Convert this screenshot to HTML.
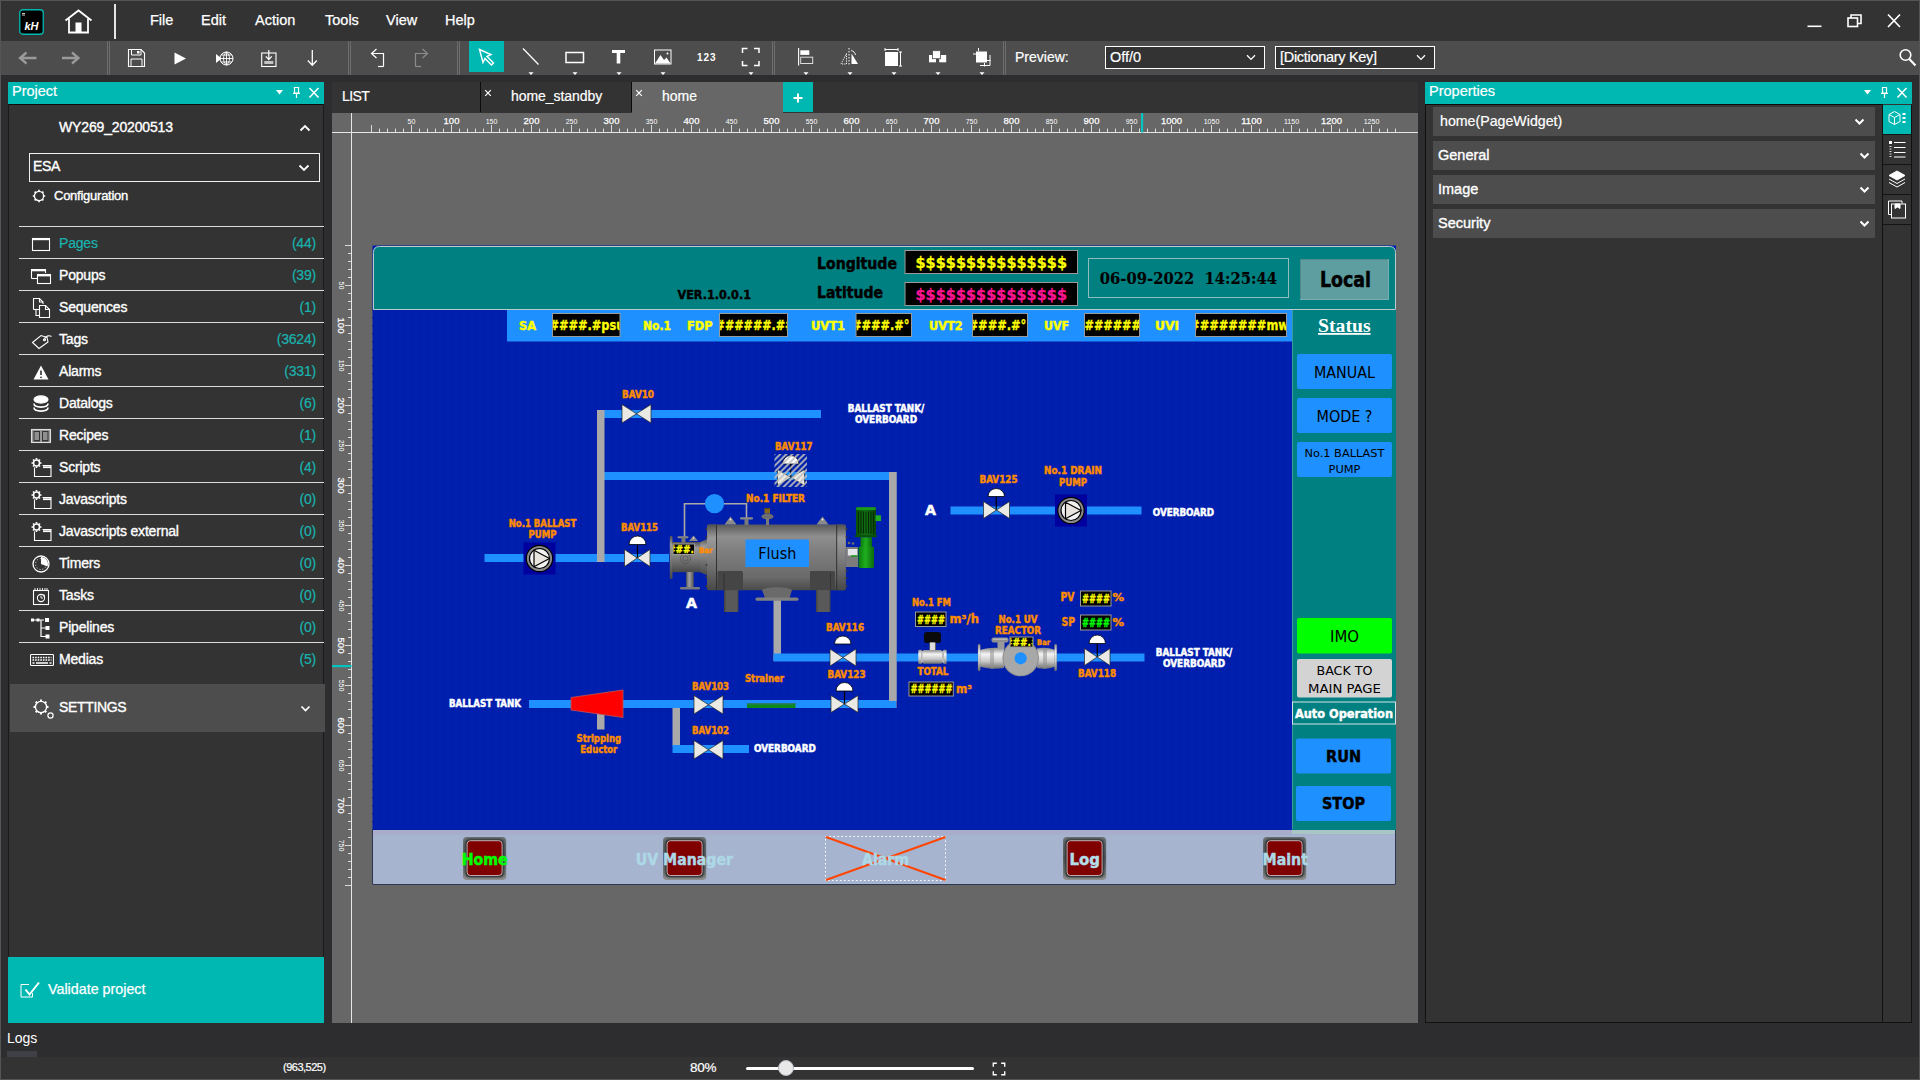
<!DOCTYPE html>
<html lang="en"><head><meta charset="utf-8"><title>HMI Editor - home</title>
<style>
*{margin:0;padding:0;box-sizing:border-box}
html,body{width:1920px;height:1080px;overflow:hidden;background:#2d2d30}
body{font-family:"Liberation Sans",sans-serif;color:#fff;position:relative}
.abs{position:absolute}
#app{position:absolute;left:0;top:0;width:1920px;height:1080px;background:#2d2d30;overflow:hidden}
#frame{position:absolute;left:0;top:0;width:1920px;height:1080px;border:1px solid #555;pointer-events:none;z-index:50}
#titlebar{position:absolute;left:0;top:0;width:1920px;height:41px;background:#333}
.menu{font-size:14.5px;white-space:nowrap;-webkit-text-stroke:0.25px #fff}
#toolbar{position:absolute;left:0;top:41px;width:1920px;height:34px;background:#4d4d4d}
.lbl{white-space:nowrap;-webkit-text-stroke:0.2px #fff}
.sel{border:1px solid #fff;background:#333;font-size:14.5px;height:23px}
.sel span{position:absolute;top:2px;white-space:nowrap;-webkit-text-stroke:0.2px #fff}
#project{position:absolute;left:8px;top:82px;width:316px;height:941px}
.phead{position:absolute;left:0;top:0;width:316px;height:22px;background:#00b8b2;font-size:15px}
.phead span{position:absolute;left:4px;top:1px;font-size:14.5px;-webkit-text-stroke:0.2px #fff}
.pbody{position:absolute;left:0;top:22px;width:316px;height:853px;background:#333;border-left:1px solid #1a1a1a;border-right:1px solid #1a1a1a;box-shadow:inset 0 1px 0 #0c0c0c}
.pbody span{white-space:nowrap;-webkit-text-stroke:0.35px #fff}
.row{left:0;width:316px;height:31px}
.row .ic{position:absolute;left:21px;top:6px}
.row .nm{position:absolute;left:50px;top:8px;font-size:14px;letter-spacing:-0.2px}
.row .ct{position:absolute;right:9px;top:8px;font-size:14px;letter-spacing:-0.2px;color:#19b3ae;-webkit-text-stroke:0.2px #19b3ae}
.row .teal{color:#19b3ae;-webkit-text-stroke:0.2px #19b3ae}
.validate{position:absolute;left:0;top:875px;width:316px;height:66px;background:#00b8b2}
.validate span{white-space:nowrap;-webkit-text-stroke:0.25px #fff}
#center{position:absolute;left:332px;top:82px;width:1086px;height:941px;background:#676767;overflow:hidden}
#tabs{position:absolute;left:0;top:0;width:1086px;height:31px;background:#333}
.tab{position:absolute;top:0;height:30px;background:#333;font-size:14px;border-right:1px solid #0c0c0c}
.tab span{position:absolute;top:6px;white-space:nowrap;-webkit-text-stroke:0.2px #fff}
.tab .x{font-size:12px;top:2px}
#props{position:absolute;left:1425px;top:82px;width:487px;height:941px}
#props .phead{width:487px}
#props .pb{position:absolute;left:0;top:22px;width:457px;height:919px;background:#333;border-left:1px solid #111;border-bottom:1px solid #111;box-shadow:inset 0 1px 0 #0c0c0c}
.prow{position:absolute;left:7px;width:442px;height:29px;background:#4d4d4d;font-size:14.5px}
.prow span{position:absolute;left:5px;top:6px;-webkit-text-stroke:0.35px #fff;white-space:nowrap}
#pstrip{position:absolute;left:457px;top:22px;width:30px;height:919px;background:#333;border:1px solid #111;border-top:none}
.ptab{position:absolute;left:0;width:28px;height:30px;border-bottom:1px solid #141414}
#logs{position:absolute;left:0;top:1023px;width:1920px;height:34px;background:#2d2d30;font-size:14.5px}
#status{position:absolute;left:0;top:1057px;width:1920px;height:23px;background:#333}
</style></head>
<body><div id="app">
<div id="titlebar">
<svg class="abs" style="left:19px;top:9px" width="25" height="26" viewBox="0 0 25 26"><rect x="0.75" y="0.75" width="23.5" height="24.5" rx="3" fill="#000" stroke="#00b8b2" stroke-width="1.3"/><rect x="3" y="4" width="3" height="0.9" fill="#ddd"/><rect x="3" y="5.6" width="3" height="0.9" fill="#ddd"/><text x="5.5" y="20.5" font-family="Liberation Sans, sans-serif" font-size="11" font-weight="bold" font-style="italic" fill="#fff" textLength="14" lengthAdjust="spacingAndGlyphs">kH</text></svg>
<svg class="abs" style="left:64px;top:9px" width="30" height="26" viewBox="0 0 30 26"><path d="M1.5 11.5 L14.5 1.5 L27.5 11.5" fill="none" stroke="#fff" stroke-width="1.8" stroke-linejoin="miter"/><path d="M5 9.5 V23.5 H24 V9.5" fill="none" stroke="#fff" stroke-width="1.8"/><rect x="11.5" y="13.5" width="6" height="10" fill="#fff"/></svg>
<div class="abs" style="left:114px;top:4px;width:2px;height:35px;background:#e4e4e4"></div>
<span class="menu abs" style="left:150px;top:12px;width:22px">File</span>
<span class="menu abs" style="left:201px;top:12px;width:26px">Edit</span>
<span class="menu abs" style="left:255px;top:12px;width:41px">Action</span>
<span class="menu abs" style="left:325px;top:12px;width:33px">Tools</span>
<span class="menu abs" style="left:386px;top:12px;width:31px">View</span>
<span class="menu abs" style="left:445px;top:12px;width:30px">Help</span>
<svg class="abs" style="left:1800px;top:8px" width="110" height="26" viewBox="0 0 110 26" fill="none" stroke="#fff" stroke-width="1.6"><path d="M7.5 18.3 H21.5"/><rect x="48" y="10" width="9.5" height="8.5"/><path d="M51 10 V7 H61 V15.5 H57.5"/><path d="M88 6.5 L100 19 M100 6.5 L88 19" stroke-width="1.7"/></svg>
</div>
<div id="toolbar">
<svg class="abs" style="left:0;top:0" width="1920" height="34" viewBox="0 0 1920 34"><path d="M36.5 17 H20.5 M26.5 11.5 L20.0 17 L26.5 22.5" fill="none" stroke="#9a9a9a" stroke-width="2.3"/><path d="M62 17 H78 M72 11.5 L78.5 17 L72 22.5" fill="none" stroke="#9a9a9a" stroke-width="2.3"/><path d="M107.5 0V34M109.5 0V34" stroke="#6e6e6e" stroke-width="1"/><path d="M128.5 8.5 H141 L144.5 12 V25.5 H128.5 Z" fill="none" stroke="#fff" stroke-width="1.1"/><path d="M131.5 8.5 V14 H141 V8.5 M131 25.5 V18 H142 V25.5" fill="none" stroke="#fff" stroke-width="1"/><rect x="137" y="10" width="2.5" height="2.5" fill="#fff"/><path d="M174.5 11.5 L186 17.5 L174.5 23.5 Z" fill="#fff"/><circle cx="226.5" cy="17.5" r="6.5" fill="none" stroke="#fff" stroke-width="1"/><path d="M226.5 11 V24 M220 17.5 H233 M221.3 14 H231.7 M221.3 21 H231.7 M226.5 11 C222.5 13.5 222.5 21.5 226.5 24 M226.5 11 C230.5 13.5 230.5 21.5 226.5 24" fill="none" stroke="#fff" stroke-width="0.9"/><path d="M216 13 L221.5 17.5 L216 22 Z" fill="#fff"/><rect x="261.7" y="12" width="14.3" height="13.5" fill="none" stroke="#fff" stroke-width="1.1"/><path d="M268.8 9 V18.5 M265.8 15.3 L268.8 18.5 L271.8 15.3" fill="none" stroke="#fff" stroke-width="1.2"/><rect x="264.3" y="20" width="9" height="3" fill="#c4c4c4"/><path d="M312.3 9 V24 M307.8 19.5 L312.3 24.3 L316.8 19.5" fill="none" stroke="#fff" stroke-width="1.3"/><path d="M348.5 0V34M350.5 0V34" stroke="#6e6e6e" stroke-width="1"/><path d="M383.5 25.5 V12.5 H372 M376.5 8 L371.5 12.5 L376.5 17" fill="none" stroke="#fff" stroke-width="1.2"/><path d="M378 25.5H383.5" stroke="#fff" stroke-width="1.2"/><path d="M415.5 25.5 V12.5 H427 M422.5 8 L427.5 12.5 L422.5 17" fill="none" stroke="#8c8c8c" stroke-width="1.2"/><path d="M415.5 25.5H421" stroke="#8c8c8c" stroke-width="1.2"/><path d="M457.5 0V34M459.5 0V34" stroke="#6e6e6e" stroke-width="1"/><rect x="469" y="0" width="35" height="31" fill="#00b8b2"/><path d="M479.5 8.5 L491 13.5 L487 15.5 L493.5 22 L491.5 24 L485 17.5 L483 21.5 Z" fill="none" stroke="#fff" stroke-width="1.4" stroke-linejoin="miter"/><path d="M523 7.5 L538.5 23.5" stroke="#fff" stroke-width="1.3"/><path d="M528.5 31.3 H533.5 L531 34 Z" fill="#fff"/><rect x="566" y="11.5" width="17.5" height="10" fill="none" stroke="#fff" stroke-width="1.5"/><path d="M572.5 31.3 H577.5 L575 34 Z" fill="#fff"/><path d="M612 9 H625 V12 H620.3 V22.5 H616.7 V12 H612 Z" fill="#fff"/><path d="M616.5 31.3 H621.5 L619 34 Z" fill="#fff"/><rect x="654.5" y="9" width="16.5" height="14" fill="none" stroke="#fff" stroke-width="1"/><path d="M655 22.5 L660.5 14 L664 19 L666.5 16.5 L670.5 22.5 Z" fill="#fff"/><circle cx="667.5" cy="12.5" r="1" fill="#fff"/><path d="M660.5 31.3 H665.5 L663 34 Z" fill="#fff"/><text x="697" y="20" font-family="Liberation Sans, sans-serif" font-size="10" font-weight="bold" fill="#fff" textLength="18.5" lengthAdjust="spacing">123</text><path d="M742.5 12 V7.5 H747.5 M754 7.5 H759 V12 M759 20 V24.5 H754 M747.5 24.5 H742.5 V20" fill="none" stroke="#fff" stroke-width="1.5"/><path d="M748.5 31.3 H753.5 L751 34 Z" fill="#fff"/><path d="M772.5 0V34M774.5 0V34" stroke="#6e6e6e" stroke-width="1"/><path d="M798.6 7 V24.5" stroke="#fff" stroke-width="1.1"/><rect x="800.3" y="9.3" width="9" height="4.6" fill="#fff"/><rect x="800.7" y="16.2" width="12" height="6.3" fill="none" stroke="#ddd" stroke-width="1"/><path d="M803.5 31.3 H808.5 L806 34 Z" fill="#fff"/><path d="M849 7 V24" stroke="#fff" stroke-width="1" stroke-dasharray="1.5 1.5"/><path d="M846.5 12.5 V23 H841 Z" fill="none" stroke="#fff" stroke-width="0.9" stroke-dasharray="1.3 1"/><path d="M851.5 12.5 V23 H858 Z" fill="#fff"/><path d="M851 9.5 C853.5 10 855 11.5 855.5 14" fill="none" stroke="#fff" stroke-width="0.9"/><path d="M847.5 31.3 H852.5 L850 34 Z" fill="#fff"/><rect x="885" y="11" width="13" height="14" fill="#fff"/><path d="M885 8.5 H898 M885 7 V10 M898 7 V10 M900.5 11 V25 M899 11 H902 M899 25 H902" stroke="#fff" stroke-width="1"/><path d="M891.5 31.3 H896.5 L894 34 Z" fill="#fff"/><rect x="929" y="14" width="7" height="7.3" fill="#fff"/><rect x="939.2" y="14" width="7" height="7.3" fill="#fff"/><rect x="932.5" y="9.7" width="8" height="8" fill="#fff" stroke="#4d4d4d" stroke-width="0.8"/><path d="M935.5 31.3 H940.5 L938 34 Z" fill="#fff"/><rect x="976" y="10.5" width="11" height="11" fill="#fff"/><path d="M978.5 7 V10 M973 13 H976 M984.5 22 V25.5 M987 19.5 H990.5 M980 24.5 H990 V14" fill="none" stroke="#fff" stroke-width="1"/><path d="M979.5 31.3 H984.5 L982 34 Z" fill="#fff"/><path d="M1003.5 0V34M1005.5 0V34" stroke="#6e6e6e" stroke-width="1"/><circle cx="1905.5" cy="14" r="5.3" fill="none" stroke="#fff" stroke-width="1.6"/><path d="M1909.3 18 L1915.5 24.5" stroke="#fff" stroke-width="2.2"/></svg>
<span class="abs lbl" style="left:1015px;top:8px;font-size:14px">Preview:</span>
<div class="sel abs" style="left:1105px;top:5px;width:160px;height:23px"><span style="left:4px">Off/0</span><svg class="abs" style="left:140px;top:7px" width="10" height="7" viewBox="0 0 10 7"><path d="M1 1.2 L5 5.4 L9 1.2" fill="none" stroke="#fff" stroke-width="1.3"/></svg></div>
<div class="sel abs" style="left:1275px;top:5px;width:160px;height:23px"><span style="left:4px;letter-spacing:-0.3px">[Dictionary Key]</span><svg class="abs" style="left:140px;top:7px" width="10" height="7" viewBox="0 0 10 7"><path d="M1 1.2 L5 5.4 L9 1.2" fill="none" stroke="#fff" stroke-width="1.3"/></svg></div>
</div>
<div id="project">
<div class="phead"><span>Project</span><svg class="abs" style="right:2px;top:3px" width="50" height="16" viewBox="0 0 50 16"><path d="M4 5 H11 L7.5 9.5 Z" fill="#fff"/><path d="M22.5 2.5 H26.5 V8 H22.5 Z M21 8.3 H28 M24.5 8.5 V13" fill="none" stroke="#fff" stroke-width="1.2"/><path d="M37.5 3 L46.5 12.5 M46.5 3 L37.5 12.5" stroke="#fff" stroke-width="1.5"/></svg></div>
<div class="pbody">
<span class="abs" style="left:50px;top:15px;font-size:14px;width:116px;letter-spacing:-0.15px">WY269_20200513</span>
<svg class="abs" style="left:290px;top:20px" width="12" height="8" viewBox="0 0 12 8"><path d="M1.5 6.5 L6 2 L10.5 6.5" fill="none" stroke="#fff" stroke-width="1.8"/></svg>
<div class="abs" style="left:20px;top:49px;width:291px;height:29px;border:1px solid #f0f0f0;box-sizing:border-box"><span class="abs" style="left:3px;top:4px;font-size:14px;letter-spacing:-0.4px">ESA</span><svg class="abs" style="left:268px;top:10px" width="12" height="8" viewBox="0 0 12 8"><path d="M1.5 1.5 L6 6 L10.5 1.5" fill="none" stroke="#fff" stroke-width="1.8"/></svg></div>
<svg class="abs" style="left:23px;top:85px" width="14" height="14" viewBox="0 0 14 14"><circle cx="7" cy="7" r="4.6" fill="none" stroke="#fff" stroke-width="1.3"/><g stroke="#fff" stroke-width="1.6"><path d="M7 0.8V2.6M7 11.4V13.2M0.8 7H2.6M11.4 7H13.2M2.6 2.6L3.9 3.9M10.1 10.1L11.4 11.4M2.6 11.4L3.9 10.1M10.1 3.9L11.4 2.6"/></g></svg>
<span class="abs" style="left:45px;top:84px;font-size:13px;letter-spacing:-0.25px">Configuration</span>
<div class="abs" style="left:10px;top:122px;width:305px;height:1px;background:#dcdcdc"></div>
<div class="row abs" style="top:123px"><svg class="ic" width="22" height="22" viewBox="0 0 22 22" fill="none" stroke="#fff" stroke-width="1.1"><rect x="2.5" y="5.5" width="17" height="12"/><path d="M2.5 6.2H19.5" stroke-width="2"/></svg><span class="nm teal">Pages</span><span class="ct">(44)</span></div>
<div class="abs" style="left:10px;top:154px;width:305px;height:1px;background:#dcdcdc"></div>
<div class="row abs" style="top:155px"><svg class="ic" width="22" height="22" viewBox="0 0 22 22" fill="none" stroke="#fff" stroke-width="1.1"><path d="M1.5 13.5 V4.5 H15.5 V8"/><path d="M1.5 5.3H15.5" stroke-width="2"/><rect x="7.5" y="9.5" width="13" height="9"/><path d="M7.5 10.4H20.5" stroke-width="2"/><path d="M1.5 13.5H7.5"/></svg><span class="nm">Popups</span><span class="ct">(39)</span></div>
<div class="abs" style="left:10px;top:186px;width:305px;height:1px;background:#dcdcdc"></div>
<div class="row abs" style="top:187px"><svg class="ic" width="22" height="22" viewBox="0 0 22 22" fill="none" stroke="#fff" stroke-width="1.1"><path d="M3.5 12.5 V1.5 H9.5 L13 5 V7"/><path d="M9.5 1.5V5H13" /><path d="M9.5 20.5 V8.5 H15.5 L19.5 12.5 V20.5 Z"/><path d="M15.5 8.5V12.5H19.5"/><path d="M3.5 12.5H9.5"/><path d="M6 13v5.5h3.5" /></svg><span class="nm">Sequences</span><span class="ct">(1)</span></div>
<div class="abs" style="left:10px;top:218px;width:305px;height:1px;background:#dcdcdc"></div>
<div class="row abs" style="top:219px"><svg class="ic" width="22" height="22" viewBox="0 0 22 22" fill="none" stroke="#fff" stroke-width="1.1"><path d="M2.5 13.5 L11 6.5 L17 8.5 L18 13 L9 19.5 Z"/><circle cx="14.5" cy="10.8" r="1"/><path d="M14.5 10.5 C15 7 19 6 21.5 7.5"/></svg><span class="nm">Tags</span><span class="ct">(3624)</span></div>
<div class="abs" style="left:10px;top:250px;width:305px;height:1px;background:#dcdcdc"></div>
<div class="row abs" style="top:251px"><svg class="ic" width="22" height="22" viewBox="0 0 22 22" fill="none" stroke="#fff" stroke-width="1.1"><path d="M11 4.5 L18.5 18.5 H3.5 Z" fill="#fff" stroke="none"/><path d="M11 9.5V14" stroke="#333" stroke-width="1.6"/><circle cx="11" cy="16.3" r="0.9" fill="#333" stroke="none"/></svg><span class="nm">Alarms</span><span class="ct">(331)</span></div>
<div class="abs" style="left:10px;top:282px;width:305px;height:1px;background:#dcdcdc"></div>
<div class="row abs" style="top:283px"><svg class="ic" width="22" height="22" viewBox="0 0 22 22" fill="none" stroke="#fff" stroke-width="1.1"><ellipse cx="11" cy="6.5" rx="7" ry="3.6" fill="#fff"/><path d="M4 10.5 C4 15.3 18 15.3 18 10.5 M4 14.5 C4 19.3 18 19.3 18 14.5" stroke-width="1.6"/></svg><span class="nm">Datalogs</span><span class="ct">(6)</span></div>
<div class="abs" style="left:10px;top:314px;width:305px;height:1px;background:#dcdcdc"></div>
<div class="row abs" style="top:315px"><svg class="ic" width="22" height="22" viewBox="0 0 22 22" fill="none" stroke="#fff" stroke-width="1.1"><rect x="1.5" y="4.5" width="19" height="13" fill="#999" stroke="#ddd"/><rect x="3.5" y="6" width="6.5" height="10.5" fill="#333" stroke="none"/><rect x="12" y="6" width="6.5" height="10.5" fill="#333" stroke="none"/><path d="M4.5 8H9M4.5 10H9M4.5 12H9M4.5 14H9M13 8H17.5M13 10H17.5M13 12H17.5M13 14H17.5" stroke-width="0.9"/></svg><span class="nm">Recipes</span><span class="ct">(1)</span></div>
<div class="abs" style="left:10px;top:346px;width:305px;height:1px;background:#dcdcdc"></div>
<div class="row abs" style="top:347px"><svg class="ic" width="22" height="22" viewBox="0 0 22 22" fill="none" stroke="#fff" stroke-width="1.1"><path d="M4.5 10.5 V19.5 H21 V8.5 H12.5" /><path d="M13 10.2H21" stroke-width="1.8"/><circle cx="6.5" cy="6" r="3" stroke-width="1.5"/><path d="M6.5 1V2.5M6.5 9.5V11M1.5 6H3M10 6H11.5M3 2.5L4 3.5M9 8.5L10 9.5M3 9.5L4 8.5M9 3.5L10 2.5" stroke-width="1.7"/></svg><span class="nm">Scripts</span><span class="ct">(4)</span></div>
<div class="abs" style="left:10px;top:378px;width:305px;height:1px;background:#dcdcdc"></div>
<div class="row abs" style="top:379px"><svg class="ic" width="22" height="22" viewBox="0 0 22 22" fill="none" stroke="#fff" stroke-width="1.1"><path d="M4.5 10.5 V19.5 H21 V8.5 H12.5" /><path d="M13 10.2H21" stroke-width="1.8"/><circle cx="6.5" cy="6" r="3" stroke-width="1.5"/><path d="M6.5 1V2.5M6.5 9.5V11M1.5 6H3M10 6H11.5M3 2.5L4 3.5M9 8.5L10 9.5M3 9.5L4 8.5M9 3.5L10 2.5" stroke-width="1.7"/></svg><span class="nm">Javascripts</span><span class="ct">(0)</span></div>
<div class="abs" style="left:10px;top:410px;width:305px;height:1px;background:#dcdcdc"></div>
<div class="row abs" style="top:411px"><svg class="ic" width="22" height="22" viewBox="0 0 22 22" fill="none" stroke="#fff" stroke-width="1.1"><path d="M4.5 10.5 V19.5 H21 V8.5 H12.5" /><path d="M13 10.2H21" stroke-width="1.8"/><circle cx="6.5" cy="6" r="3" stroke-width="1.5"/><path d="M6.5 1V2.5M6.5 9.5V11M1.5 6H3M10 6H11.5M3 2.5L4 3.5M9 8.5L10 9.5M3 9.5L4 8.5M9 3.5L10 2.5" stroke-width="1.7"/></svg><span class="nm">Javascripts external</span><span class="ct">(0)</span></div>
<div class="abs" style="left:10px;top:442px;width:305px;height:1px;background:#dcdcdc"></div>
<div class="row abs" style="top:443px"><svg class="ic" width="22" height="22" viewBox="0 0 22 22" fill="none" stroke="#fff" stroke-width="1.1"><circle cx="11" cy="11" r="8" stroke-width="1.3"/><path d="M11 11 V4 A7 7 0 0 1 17.5 13.5 Z" fill="#fff" stroke="none"/><circle cx="11" cy="11" r="5.5" stroke-dasharray="1 2" stroke-width="0.9"/></svg><span class="nm">Timers</span><span class="ct">(0)</span></div>
<div class="abs" style="left:10px;top:474px;width:305px;height:1px;background:#dcdcdc"></div>
<div class="row abs" style="top:475px"><svg class="ic" width="22" height="22" viewBox="0 0 22 22" fill="none" stroke="#fff" stroke-width="1.1"><rect x="3.5" y="5.5" width="15" height="14"/><path d="M5 3v2.5M7.5 3v2.5M10 3v2.5M12.5 3v2.5M15 3v2.5M17 3v2.5" stroke-width="0.9"/><circle cx="11" cy="13" r="3.6"/><path d="M11 13V10.5 M11 13 H13 M13.5 9.5 l1.5 1 l-1.5 1" stroke-width="0.9"/></svg><span class="nm">Tasks</span><span class="ct">(0)</span></div>
<div class="abs" style="left:10px;top:506px;width:305px;height:1px;background:#dcdcdc"></div>
<div class="row abs" style="top:507px"><svg class="ic" width="22" height="22" viewBox="0 0 22 22" fill="none" stroke="#fff" stroke-width="1.1"><path d="M4 3H14 M11 3V19.5H16 M11 11H16" stroke-width="1.2"/><rect x="1" y="1.5" width="3" height="3" fill="#fff" stroke="none"/><rect x="6.5" y="1.5" width="3" height="3" fill="#fff" stroke="none"/><rect x="15" y="1" width="4" height="4" fill="#fff" stroke="none"/><rect x="15.5" y="9" width="4" height="4" fill="#fff" stroke="none"/><rect x="15.5" y="17.5" width="4" height="4" fill="#fff" stroke="none"/></svg><span class="nm">Pipelines</span><span class="ct">(0)</span></div>
<div class="abs" style="left:10px;top:538px;width:305px;height:1px;background:#dcdcdc"></div>
<div class="row abs" style="top:539px"><svg class="ic" width="24" height="22" viewBox="0 0 24 22" fill="none" stroke="#fff" stroke-width="1.1"><rect x="0.5" y="5.5" width="23" height="11" rx="1"/><path d="M2.5 8.5H21.5M2.5 11H21.5" stroke-dasharray="1.6 1" stroke-width="1.4"/><path d="M2.5 14H4.5M6 14H18M19.5 14H21.5" stroke-width="1.4"/></svg><span class="nm">Medias</span><span class="ct">(5)</span></div>
<div class="abs" style="left:1px;top:580px;width:315px;height:48px;background:#4d4d4d"><svg class="abs" style="left:22px;top:13px" width="24" height="24" viewBox="0 0 24 24"><circle cx="9" cy="10" r="5.6" fill="none" stroke="#fff" stroke-width="1.4"/><g stroke="#fff" stroke-width="2"><path d="M9 2.5V4.4M9 15.6V17.5M1.5 10H3.4M14.6 10H16.5M3.7 4.7L5 6M13 14L14.3 15.3M3.7 15.3L5 14M13 6L14.3 4.7"/></g><circle cx="18.5" cy="18.5" r="2.6" fill="#4d4d4d" stroke="#fff" stroke-width="1.2"/></svg><span class="abs" style="left:49px;top:15px;font-size:14px;letter-spacing:-0.35px">SETTINGS</span><svg class="abs" style="left:290px;top:21px" width="11" height="8" viewBox="0 0 11 8"><path d="M1.5 1.5 L5.5 5.5 L9.5 1.5" fill="none" stroke="#fff" stroke-width="1.7"/></svg></div>
</div>
<div class="validate"><svg class="abs" style="left:12px;top:24px" width="22" height="18" viewBox="0 0 22 18"><path d="M1 3.5 V16 H12.5 V12" fill="none" stroke="#fff" stroke-width="1"/><path d="M1 3.5 H9" fill="none" stroke="#fff" stroke-width="1"/><path d="M5.5 8.5 L9.5 13.5 L19 1.5" fill="none" stroke="#fff" stroke-width="2"/></svg><span class="abs" style="left:40px;top:24px;font-size:14.3px">Validate project</span></div>
</div>
<div id="center">
<div id="tabs">
<div class="tab" style="left:0;width:149px"><span style="left:10px;letter-spacing:-0.6px">LIST</span></div>
<div class="tab" style="left:149px;width:151px"><svg class="abs" style="left:3px;top:7px" width="8" height="8" viewBox="0 0 8 8"><path d="M1.2 1.2 L6.8 6.8 M6.8 1.2 L1.2 6.8" stroke="#fff" stroke-width="1.2"/></svg><span style="left:30px;letter-spacing:-0.05px">home_standby</span></div>
<div class="tab" style="left:300px;width:151px;background:#676767;border:none;height:31px"><svg class="abs" style="left:3px;top:7px" width="8" height="8" viewBox="0 0 8 8"><path d="M1.2 1.2 L6.8 6.8 M6.8 1.2 L1.2 6.8" stroke="#fff" stroke-width="1.2"/></svg><span style="left:30px">home</span></div>
<div class="tab" style="left:451px;width:30px;background:#00b8b2;border:none"><svg class="abs" style="left:9px;top:10px" width="12" height="12" viewBox="0 0 12 12"><path d="M6 1.5 V10.5 M1.5 6 H10.5" stroke="#fff" stroke-width="2"/></svg></div>
</div>
<svg class="abs" style="left:0;top:31px" width="1086" height="910" viewBox="332 113 1086 910"><path d="M332 132.5 H1418 M351.5 113 V1023" stroke="#e6e6e6" stroke-width="1" fill="none"/><path d="M371.5 125V132M379.5 128.5V132M387.5 128.5V132M395.5 128.5V132M403.5 128.5V132M411.5 125V132M419.5 128.5V132M427.5 128.5V132M435.5 128.5V132M443.5 128.5V132M451.5 125V132M459.5 128.5V132M467.5 128.5V132M475.5 128.5V132M483.5 128.5V132M491.5 125V132M499.5 128.5V132M507.5 128.5V132M515.5 128.5V132M523.5 128.5V132M531.5 125V132M539.5 128.5V132M547.5 128.5V132M555.5 128.5V132M563.5 128.5V132M571.5 125V132M579.5 128.5V132M587.5 128.5V132M595.5 128.5V132M603.5 128.5V132M611.5 125V132M619.5 128.5V132M627.5 128.5V132M635.5 128.5V132M643.5 128.5V132M651.5 125V132M659.5 128.5V132M667.5 128.5V132M675.5 128.5V132M683.5 128.5V132M691.5 125V132M699.5 128.5V132M707.5 128.5V132M715.5 128.5V132M723.5 128.5V132M731.5 125V132M739.5 128.5V132M747.5 128.5V132M755.5 128.5V132M763.5 128.5V132M771.5 125V132M779.5 128.5V132M787.5 128.5V132M795.5 128.5V132M803.5 128.5V132M811.5 125V132M819.5 128.5V132M827.5 128.5V132M835.5 128.5V132M843.5 128.5V132M851.5 125V132M859.5 128.5V132M867.5 128.5V132M875.5 128.5V132M883.5 128.5V132M891.5 125V132M899.5 128.5V132M907.5 128.5V132M915.5 128.5V132M923.5 128.5V132M931.5 125V132M939.5 128.5V132M947.5 128.5V132M955.5 128.5V132M963.5 128.5V132M971.5 125V132M979.5 128.5V132M987.5 128.5V132M995.5 128.5V132M1003.5 128.5V132M1011.5 125V132M1019.5 128.5V132M1027.5 128.5V132M1035.5 128.5V132M1043.5 128.5V132M1051.5 125V132M1059.5 128.5V132M1067.5 128.5V132M1075.5 128.5V132M1083.5 128.5V132M1091.5 125V132M1099.5 128.5V132M1107.5 128.5V132M1115.5 128.5V132M1123.5 128.5V132M1131.5 125V132M1139.5 128.5V132M1147.5 128.5V132M1155.5 128.5V132M1163.5 128.5V132M1171.5 125V132M1179.5 128.5V132M1187.5 128.5V132M1195.5 128.5V132M1203.5 128.5V132M1211.5 125V132M1219.5 128.5V132M1227.5 128.5V132M1235.5 128.5V132M1243.5 128.5V132M1251.5 125V132M1259.5 128.5V132M1267.5 128.5V132M1275.5 128.5V132M1283.5 128.5V132M1291.5 125V132M1299.5 128.5V132M1307.5 128.5V132M1315.5 128.5V132M1323.5 128.5V132M1331.5 125V132M1339.5 128.5V132M1347.5 128.5V132M1355.5 128.5V132M1363.5 128.5V132M1371.5 125V132M1379.5 128.5V132M1387.5 128.5V132M1395.5 128.5V132" stroke="#dadada" stroke-width="1"/><path d="M345 245.5H351M348 253.5H351M348 261.5H351M348 269.5H351M348 277.5H351M345 285.5H351M348 293.5H351M348 301.5H351M348 309.5H351M348 317.5H351M345 325.5H351M348 333.5H351M348 341.5H351M348 349.5H351M348 357.5H351M345 365.5H351M348 373.5H351M348 381.5H351M348 389.5H351M348 397.5H351M345 405.5H351M348 413.5H351M348 421.5H351M348 429.5H351M348 437.5H351M345 445.5H351M348 453.5H351M348 461.5H351M348 469.5H351M348 477.5H351M345 485.5H351M348 493.5H351M348 501.5H351M348 509.5H351M348 517.5H351M345 525.5H351M348 533.5H351M348 541.5H351M348 549.5H351M348 557.5H351M345 565.5H351M348 573.5H351M348 581.5H351M348 589.5H351M348 597.5H351M345 605.5H351M348 613.5H351M348 621.5H351M348 629.5H351M348 637.5H351M345 645.5H351M348 653.5H351M348 661.5H351M348 669.5H351M348 677.5H351M345 685.5H351M348 693.5H351M348 701.5H351M348 709.5H351M348 717.5H351M345 725.5H351M348 733.5H351M348 741.5H351M348 749.5H351M348 757.5H351M345 765.5H351M348 773.5H351M348 781.5H351M348 789.5H351M348 797.5H351M345 805.5H351M348 813.5H351M348 821.5H351M348 829.5H351M348 837.5H351M345 845.5H351M348 853.5H351M348 861.5H351M348 869.5H351M348 877.5H351M345 885.5H351" stroke="#dadada" stroke-width="1"/><text x="411.5" y="123.5" text-anchor="middle" font-size="7" fill="#fff" font-family="Liberation Sans, sans-serif">50</text><text x="451.5" y="124" text-anchor="middle" font-size="9.5" fill="#fff" font-family="Liberation Sans, sans-serif" stroke="#fff" stroke-width="0.25">100</text><text x="491.5" y="123.5" text-anchor="middle" font-size="7" fill="#fff" font-family="Liberation Sans, sans-serif">150</text><text x="531.5" y="124" text-anchor="middle" font-size="9.5" fill="#fff" font-family="Liberation Sans, sans-serif" stroke="#fff" stroke-width="0.25">200</text><text x="571.5" y="123.5" text-anchor="middle" font-size="7" fill="#fff" font-family="Liberation Sans, sans-serif">250</text><text x="611.5" y="124" text-anchor="middle" font-size="9.5" fill="#fff" font-family="Liberation Sans, sans-serif" stroke="#fff" stroke-width="0.25">300</text><text x="651.5" y="123.5" text-anchor="middle" font-size="7" fill="#fff" font-family="Liberation Sans, sans-serif">350</text><text x="691.5" y="124" text-anchor="middle" font-size="9.5" fill="#fff" font-family="Liberation Sans, sans-serif" stroke="#fff" stroke-width="0.25">400</text><text x="731.5" y="123.5" text-anchor="middle" font-size="7" fill="#fff" font-family="Liberation Sans, sans-serif">450</text><text x="771.5" y="124" text-anchor="middle" font-size="9.5" fill="#fff" font-family="Liberation Sans, sans-serif" stroke="#fff" stroke-width="0.25">500</text><text x="811.5" y="123.5" text-anchor="middle" font-size="7" fill="#fff" font-family="Liberation Sans, sans-serif">550</text><text x="851.5" y="124" text-anchor="middle" font-size="9.5" fill="#fff" font-family="Liberation Sans, sans-serif" stroke="#fff" stroke-width="0.25">600</text><text x="891.5" y="123.5" text-anchor="middle" font-size="7" fill="#fff" font-family="Liberation Sans, sans-serif">650</text><text x="931.5" y="124" text-anchor="middle" font-size="9.5" fill="#fff" font-family="Liberation Sans, sans-serif" stroke="#fff" stroke-width="0.25">700</text><text x="971.5" y="123.5" text-anchor="middle" font-size="7" fill="#fff" font-family="Liberation Sans, sans-serif">750</text><text x="1011.5" y="124" text-anchor="middle" font-size="9.5" fill="#fff" font-family="Liberation Sans, sans-serif" stroke="#fff" stroke-width="0.25">800</text><text x="1051.5" y="123.5" text-anchor="middle" font-size="7" fill="#fff" font-family="Liberation Sans, sans-serif">850</text><text x="1091.5" y="124" text-anchor="middle" font-size="9.5" fill="#fff" font-family="Liberation Sans, sans-serif" stroke="#fff" stroke-width="0.25">900</text><text x="1131.5" y="123.5" text-anchor="middle" font-size="7" fill="#fff" font-family="Liberation Sans, sans-serif">950</text><text x="1171.5" y="124" text-anchor="middle" font-size="9.5" fill="#fff" font-family="Liberation Sans, sans-serif" stroke="#fff" stroke-width="0.25">1000</text><text x="1211.5" y="123.5" text-anchor="middle" font-size="7" fill="#fff" font-family="Liberation Sans, sans-serif">1050</text><text x="1251.5" y="124" text-anchor="middle" font-size="9.5" fill="#fff" font-family="Liberation Sans, sans-serif" stroke="#fff" stroke-width="0.25">1100</text><text x="1291.5" y="123.5" text-anchor="middle" font-size="7" fill="#fff" font-family="Liberation Sans, sans-serif">1150</text><text x="1331.5" y="124" text-anchor="middle" font-size="9.5" fill="#fff" font-family="Liberation Sans, sans-serif" stroke="#fff" stroke-width="0.25">1200</text><text x="1371.5" y="123.5" text-anchor="middle" font-size="7" fill="#fff" font-family="Liberation Sans, sans-serif">1250</text><text transform="translate(338.5 285.5) rotate(90)" text-anchor="middle" font-size="7" fill="#fff" font-family="Liberation Sans, sans-serif">50</text><text transform="translate(337.5 325.5) rotate(90)" text-anchor="middle" font-size="9.5" fill="#fff" font-family="Liberation Sans, sans-serif" stroke="#fff" stroke-width="0.25">100</text><text transform="translate(338.5 365.5) rotate(90)" text-anchor="middle" font-size="7" fill="#fff" font-family="Liberation Sans, sans-serif">150</text><text transform="translate(337.5 405.5) rotate(90)" text-anchor="middle" font-size="9.5" fill="#fff" font-family="Liberation Sans, sans-serif" stroke="#fff" stroke-width="0.25">200</text><text transform="translate(338.5 445.5) rotate(90)" text-anchor="middle" font-size="7" fill="#fff" font-family="Liberation Sans, sans-serif">250</text><text transform="translate(337.5 485.5) rotate(90)" text-anchor="middle" font-size="9.5" fill="#fff" font-family="Liberation Sans, sans-serif" stroke="#fff" stroke-width="0.25">300</text><text transform="translate(338.5 525.5) rotate(90)" text-anchor="middle" font-size="7" fill="#fff" font-family="Liberation Sans, sans-serif">350</text><text transform="translate(337.5 565.5) rotate(90)" text-anchor="middle" font-size="9.5" fill="#fff" font-family="Liberation Sans, sans-serif" stroke="#fff" stroke-width="0.25">400</text><text transform="translate(338.5 605.5) rotate(90)" text-anchor="middle" font-size="7" fill="#fff" font-family="Liberation Sans, sans-serif">450</text><text transform="translate(337.5 645.5) rotate(90)" text-anchor="middle" font-size="9.5" fill="#fff" font-family="Liberation Sans, sans-serif" stroke="#fff" stroke-width="0.25">500</text><text transform="translate(338.5 685.5) rotate(90)" text-anchor="middle" font-size="7" fill="#fff" font-family="Liberation Sans, sans-serif">550</text><text transform="translate(337.5 725.5) rotate(90)" text-anchor="middle" font-size="9.5" fill="#fff" font-family="Liberation Sans, sans-serif" stroke="#fff" stroke-width="0.25">600</text><text transform="translate(338.5 765.5) rotate(90)" text-anchor="middle" font-size="7" fill="#fff" font-family="Liberation Sans, sans-serif">650</text><text transform="translate(337.5 805.5) rotate(90)" text-anchor="middle" font-size="9.5" fill="#fff" font-family="Liberation Sans, sans-serif" stroke="#fff" stroke-width="0.25">700</text><text transform="translate(338.5 845.5) rotate(90)" text-anchor="middle" font-size="7" fill="#fff" font-family="Liberation Sans, sans-serif">750</text><rect x="1141" y="113" width="2.2" height="19.5" fill="#00c4bd"/><rect x="332" y="665" width="19.5" height="2.2" fill="#00c4bd"/></svg>
</div>
<svg id="page" class="abs" style="left:372px;top:245px" width="1024" height="640" viewBox="372 245 1024 640">
<defs>
<pattern id="dots" x="372.3" y="245.3" width="8" height="8" patternUnits="userSpaceOnUse"><rect x="0" y="0" width="1.1" height="1.1" fill="#001074"/></pattern>
<linearGradient id="tank" x1="0" y1="0" x2="0" y2="1"><stop offset="0" stop-color="#5a5a5a"/><stop offset="0.18" stop-color="#8e8e8e"/><stop offset="0.4" stop-color="#7f7f7f"/><stop offset="0.8" stop-color="#6a6a6a"/><stop offset="1" stop-color="#4a4a4a"/></linearGradient>
<linearGradient id="tank2" x1="0" y1="0" x2="0" y2="1"><stop offset="0" stop-color="#505050"/><stop offset="0.2" stop-color="#9a9a9a"/><stop offset="0.5" stop-color="#808080"/><stop offset="1" stop-color="#484848"/></linearGradient>
<linearGradient id="hpipe" x1="0" y1="0" x2="1" y2="0"><stop offset="0" stop-color="#5a5a5a"/><stop offset="0.4" stop-color="#a0a0a0"/><stop offset="1" stop-color="#555"/></linearGradient>
<linearGradient id="green2" x1="0" y1="0" x2="1" y2="0"><stop offset="0" stop-color="#0a4f0a"/><stop offset="0.5" stop-color="#127012"/><stop offset="1" stop-color="#094509"/></linearGradient><linearGradient id="green" x1="0" y1="0" x2="1" y2="0"><stop offset="0" stop-color="#0c7a0c"/><stop offset="0.45" stop-color="#1fae1f"/><stop offset="1" stop-color="#0a6a0a"/></linearGradient>
<linearGradient id="silver" x1="0" y1="0" x2="0" y2="1"><stop offset="0" stop-color="#8c8c8c"/><stop offset="0.3" stop-color="#f4f4f4"/><stop offset="0.65" stop-color="#c8c8c8"/><stop offset="1" stop-color="#6e6e6e"/></linearGradient>
<linearGradient id="btnframe" x1="0" y1="0" x2="0" y2="1"><stop offset="0" stop-color="#6b7374"/><stop offset="0.5" stop-color="#5a6061"/><stop offset="0.85" stop-color="#7a7e7e"/><stop offset="1" stop-color="#8f8f8f"/></linearGradient><filter id="blur1" x="-20%" y="-20%" width="140%" height="140%"><feGaussianBlur stdDeviation="1.3"/></filter>
<pattern id="hatch" x="774.5" y="454" width="6" height="6" patternUnits="userSpaceOnUse"><path d="M-1 7 L7 -1 M-1 1 L1 -1 M5 7 L7 5" stroke="#bfbfbf" stroke-width="1.7"/></pattern>
</defs>
<rect x="372.5" y="245.5" width="1023.5" height="639.5" fill="#001fae"/>
<rect x="372" y="310" width="920" height="520" fill="url(#dots)"/>
<path d="M373.5 309.5 V252.5 Q373.5 246.5 379.5 246.5 H1389.5 Q1395.5 246.5 1395.5 252.5 V309.5 Z" fill="#008080" stroke="#b9cccc" stroke-width="1"/>
<rect x="1292" y="310" width="104" height="520" fill="#008080"/><path d="M1292.5 310 V829" stroke="#3b9a9a" stroke-width="1"/>
<rect x="372" y="830" width="1024" height="55" fill="#a7b4cf"/><rect x="372" y="830" width="1024" height="4.6" fill="#a8adcc"/><rect x="1292" y="830" width="104" height="4" fill="#a9c6c6"/>
<path d="M372.5 830 V884.5 H1395.5 V830" fill="none" stroke="#2f3650" stroke-width="1"/>
<rect x="507" y="310" width="785" height="31.5" fill="#1e90ff"/>
<text x="677.5" y="299" font-family="DejaVu Sans Condensed, DejaVu Sans, Liberation Sans, sans-serif" font-size="12.4" font-weight="bold" fill="#000" textLength="73.5" lengthAdjust="spacingAndGlyphs" stroke="#000" stroke-width="0.45">VER.1.0.0.1</text>
<text x="817" y="269" font-family="DejaVu Sans Condensed, DejaVu Sans, Liberation Sans, sans-serif" font-size="15.2" font-weight="bold" fill="#000" textLength="80.0" lengthAdjust="spacingAndGlyphs" stroke="#000" stroke-width="0.45">Longitude</text>
<text x="817" y="298" font-family="DejaVu Sans Condensed, DejaVu Sans, Liberation Sans, sans-serif" font-size="15.2" font-weight="bold" fill="#000" textLength="66.0" lengthAdjust="spacingAndGlyphs" stroke="#000" stroke-width="0.45">Latitude</text>
<rect x="905.0" y="250.5" width="172.5" height="23" fill="#000" stroke="#9a9a9a" stroke-width="1"/><svg x="905.5" y="251" width="171.5" height="22" viewBox="905.5 251 171.5 22" overflow="hidden"><text x="915.5" y="267.5" text-anchor="start" font-family="DejaVu Sans Condensed, DejaVu Sans, Liberation Sans, sans-serif" font-size="15" font-weight="bold" fill="#ffff00" stroke="#ffff00" stroke-width="0.3" textLength="151.5" lengthAdjust="spacingAndGlyphs">$$$$$$$$$$$$$$$</text></svg>
<rect x="905.0" y="282.5" width="172.5" height="23" fill="#000" stroke="#9a9a9a" stroke-width="1"/><svg x="905.5" y="283" width="171.5" height="22" viewBox="905.5 283 171.5 22" overflow="hidden"><text x="915.5" y="299.5" text-anchor="start" font-family="DejaVu Sans Condensed, DejaVu Sans, Liberation Sans, sans-serif" font-size="15" font-weight="bold" fill="#ff1493" stroke="#ff1493" stroke-width="0.3" textLength="151.5" lengthAdjust="spacingAndGlyphs">$$$$$$$$$$$$$$$</text></svg>
<rect x="1088.5" y="258.5" width="200" height="39" fill="#008080" stroke="#8fbcbc" stroke-width="1"/>
<text x="1099.8" y="284" font-family="DejaVu Serif Condensed, DejaVu Serif, Liberation Serif, serif" font-size="15.8" font-weight="bold" fill="#000" textLength="177.2" lengthAdjust="spacingAndGlyphs" xml:space="preserve" stroke="#000" stroke-width="0.1">06-09-2022  14:25:44</text>
<rect x="1300" y="259" width="89" height="41" fill="#5f9ea0"/><path d="M1300.5 300 V259.5 H1389" fill="none" stroke="#4f8a8c" stroke-width="1"/><path d="M1300 299.5 H1388.5 V259" fill="none" stroke="#79aeb0" stroke-width="1"/>
<text x="1320" y="287" font-family="DejaVu Sans Condensed, DejaVu Sans, Liberation Sans, sans-serif" font-size="20.5" font-weight="bold" fill="#000" textLength="51.0" lengthAdjust="spacingAndGlyphs" stroke="#000" stroke-width="0.45">Local</text>
<text x="519" y="330" font-family="DejaVu Sans Condensed, DejaVu Sans, Liberation Sans, sans-serif" font-size="12.4" font-weight="bold" fill="#ffff00" textLength="17.0" lengthAdjust="spacingAndGlyphs" stroke="#ffff00" stroke-width="0.45">SA</text>
<rect x="552.5" y="313.5" width="67.5" height="23" fill="#000" stroke="#9a9a9a" stroke-width="1"/><svg x="553" y="314" width="66.5" height="22" viewBox="553 314 66.5 22" overflow="hidden"><text x="549.4" y="330" text-anchor="start" font-family="DejaVu Sans Condensed, DejaVu Sans, Liberation Sans, sans-serif" font-size="13.2" font-weight="bold" fill="#ffff00" stroke="#ffff00" stroke-width="0.3" textLength="75" lengthAdjust="spacingAndGlyphs">####.#psu</text></svg>
<text x="643" y="330" font-family="DejaVu Sans Condensed, DejaVu Sans, Liberation Sans, sans-serif" font-size="12.4" font-weight="bold" fill="#ffff00" textLength="28.0" lengthAdjust="spacingAndGlyphs" stroke="#ffff00" stroke-width="0.45">No.1</text>
<text x="687" y="330" font-family="DejaVu Sans Condensed, DejaVu Sans, Liberation Sans, sans-serif" font-size="12.4" font-weight="bold" fill="#ffff00" textLength="25.5" lengthAdjust="spacingAndGlyphs" stroke="#ffff00" stroke-width="0.45">FDP</text>
<rect x="719.5" y="313.5" width="68" height="23" fill="#000" stroke="#9a9a9a" stroke-width="1"/><svg x="720" y="314" width="67" height="22" viewBox="720 314 67 22" overflow="hidden"><text x="715.6" y="330" text-anchor="start" font-family="DejaVu Sans Condensed, DejaVu Sans, Liberation Sans, sans-serif" font-size="13.2" font-weight="bold" fill="#ffff00" stroke="#ffff00" stroke-width="0.3" textLength="78.8" lengthAdjust="spacingAndGlyphs">######.##</text></svg>
<text x="811" y="330" font-family="DejaVu Sans Condensed, DejaVu Sans, Liberation Sans, sans-serif" font-size="12.4" font-weight="bold" fill="#ffff00" textLength="34.0" lengthAdjust="spacingAndGlyphs" stroke="#ffff00" stroke-width="0.45">UVT1</text>
<rect x="856.0" y="313.5" width="55.5" height="23" fill="#000" stroke="#9a9a9a" stroke-width="1"/><svg x="856.5" y="314" width="54.5" height="22" viewBox="856.5 314 54.5 22" overflow="hidden"><text x="851.9" y="330" text-anchor="start" font-family="DejaVu Sans Condensed, DejaVu Sans, Liberation Sans, sans-serif" font-size="13.2" font-weight="bold" fill="#ffff00" stroke="#ffff00" stroke-width="0.3" textLength="57.6" lengthAdjust="spacingAndGlyphs">####.#°</text></svg>
<text x="929" y="330" font-family="DejaVu Sans Condensed, DejaVu Sans, Liberation Sans, sans-serif" font-size="12.4" font-weight="bold" fill="#ffff00" textLength="33.5" lengthAdjust="spacingAndGlyphs" stroke="#ffff00" stroke-width="0.45">UVT2</text>
<rect x="972.5" y="313.5" width="55" height="23" fill="#000" stroke="#9a9a9a" stroke-width="1"/><svg x="973" y="314" width="54" height="22" viewBox="973 314 54 22" overflow="hidden"><text x="968.6" y="330" text-anchor="start" font-family="DejaVu Sans Condensed, DejaVu Sans, Liberation Sans, sans-serif" font-size="13.2" font-weight="bold" fill="#ffff00" stroke="#ffff00" stroke-width="0.3" textLength="57.6" lengthAdjust="spacingAndGlyphs">####.#°</text></svg>
<text x="1044" y="330" font-family="DejaVu Sans Condensed, DejaVu Sans, Liberation Sans, sans-serif" font-size="12.4" font-weight="bold" fill="#ffff00" textLength="25.0" lengthAdjust="spacingAndGlyphs" stroke="#ffff00" stroke-width="0.45">UVF</text>
<rect x="1084.5" y="313.5" width="55" height="23" fill="#000" stroke="#9a9a9a" stroke-width="1"/><svg x="1085" y="314" width="54" height="22" viewBox="1085 314 54 22" overflow="hidden"><text x="1084.5" y="330" text-anchor="start" font-family="DejaVu Sans Condensed, DejaVu Sans, Liberation Sans, sans-serif" font-size="13.2" font-weight="bold" fill="#ffff00" stroke="#ffff00" stroke-width="0.3" textLength="65.8" lengthAdjust="spacingAndGlyphs">#######</text></svg>
<text x="1155" y="330" font-family="DejaVu Sans Condensed, DejaVu Sans, Liberation Sans, sans-serif" font-size="12.4" font-weight="bold" fill="#ffff00" textLength="24.0" lengthAdjust="spacingAndGlyphs" stroke="#ffff00" stroke-width="0.45">UVI</text>
<rect x="1195.5" y="313.5" width="91" height="23" fill="#000" stroke="#9a9a9a" stroke-width="1"/><svg x="1196" y="314" width="90" height="22" viewBox="1196 314 90 22" overflow="hidden"><text x="1190.1" y="330" text-anchor="start" font-family="DejaVu Sans Condensed, DejaVu Sans, Liberation Sans, sans-serif" font-size="13.2" font-weight="bold" fill="#ffff00" stroke="#ffff00" stroke-width="0.3" textLength="98.7" lengthAdjust="spacingAndGlyphs">########mw</text></svg>
<text x="1344.3" y="332" text-anchor="middle" font-family="Liberation Serif, serif" font-size="18" font-weight="bold" fill="#fff" text-decoration="underline" textLength="52.5" lengthAdjust="spacingAndGlyphs">Status</text>
<rect x="1297" y="354" width="95" height="35" rx="2" fill="#1e90ff"/>
<text x="1344.5" y="377.5" text-anchor="middle" font-family="DejaVu Sans Condensed, DejaVu Sans, Liberation Sans, sans-serif" font-size="15" font-weight="normal" fill="#000" textLength="61.0" lengthAdjust="spacingAndGlyphs">MANUAL</text>
<rect x="1297" y="398" width="95" height="35" rx="2" fill="#1e90ff"/>
<text x="1344.5" y="421.5" text-anchor="middle" font-family="DejaVu Sans Condensed, DejaVu Sans, Liberation Sans, sans-serif" font-size="15" font-weight="normal" fill="#000" textLength="56.0" lengthAdjust="spacingAndGlyphs">MODE ?</text>
<rect x="1297" y="442" width="95" height="35" rx="2" fill="#1e90ff"/>
<text x="1344.5" y="457" text-anchor="middle" font-family="DejaVu Sans Condensed, DejaVu Sans, Liberation Sans, sans-serif" font-size="11.2" font-weight="normal" fill="#000" textLength="80.0" lengthAdjust="spacingAndGlyphs">No.1 BALLAST</text>
<text x="1344.5" y="472.5" text-anchor="middle" font-family="DejaVu Sans Condensed, DejaVu Sans, Liberation Sans, sans-serif" font-size="11.2" font-weight="normal" fill="#000" textLength="32.0" lengthAdjust="spacingAndGlyphs">PUMP</text>
<rect x="1297" y="618" width="95" height="35.5" rx="2" fill="#00ff00"/>
<text x="1344.5" y="641.5" text-anchor="middle" font-family="DejaVu Sans Condensed, DejaVu Sans, Liberation Sans, sans-serif" font-size="15" font-weight="normal" fill="#000" textLength="29.0" lengthAdjust="spacingAndGlyphs">IMO</text>
<rect x="1297" y="659" width="95" height="38.5" rx="2" fill="#d3d3d3"/>
<text x="1344.5" y="675" text-anchor="middle" font-family="DejaVu Sans Condensed, DejaVu Sans, Liberation Sans, sans-serif" font-size="13" font-weight="normal" fill="#000" textLength="56.0" lengthAdjust="spacingAndGlyphs">BACK TO</text>
<text x="1344.5" y="693" text-anchor="middle" font-family="DejaVu Sans Condensed, DejaVu Sans, Liberation Sans, sans-serif" font-size="13" font-weight="normal" fill="#000" textLength="73.0" lengthAdjust="spacingAndGlyphs">MAIN PAGE</text>
<rect x="1292.5" y="702" width="103" height="22" fill="#008080" stroke="#d6e4e4" stroke-width="1"/>
<text x="1295" y="717.5" font-family="DejaVu Sans, sans-serif" font-size="11.8" font-weight="bold" fill="#fff" textLength="98.0" lengthAdjust="spacingAndGlyphs" stroke="#fff" stroke-width="0.45">Auto Operation</text>
<rect x="1296" y="738.5" width="95" height="35.0" rx="2" fill="#1e90ff"/>
<text x="1343.5" y="761.5" text-anchor="middle" font-family="DejaVu Sans Condensed, DejaVu Sans, Liberation Sans, sans-serif" font-size="16.5" font-weight="bold" fill="#000" textLength="35.0" lengthAdjust="spacingAndGlyphs" stroke="#000" stroke-width="0.45">RUN</text>
<rect x="1296" y="786" width="95" height="35" rx="2" fill="#1e90ff"/>
<text x="1343.5" y="809" text-anchor="middle" font-family="DejaVu Sans Condensed, DejaVu Sans, Liberation Sans, sans-serif" font-size="16.5" font-weight="bold" fill="#000" textLength="43.0" lengthAdjust="spacingAndGlyphs" stroke="#000" stroke-width="0.45">STOP</text>
<rect x="604" y="410" width="217" height="8" fill="#1e90ff"/>
<rect x="604" y="472" width="292" height="8" fill="#1e90ff"/>
<rect x="484.5" y="554" width="184.5" height="8" fill="#1e90ff"/>
<rect x="597" y="410" width="7.5" height="152" fill="#a9a9a9"/>
<rect x="889" y="472" width="7.5" height="236" fill="#a9a9a9"/>
<rect x="773.5" y="600" width="7.5" height="61" fill="#a9a9a9"/>
<rect x="773.5" y="653.5" width="371.0" height="8" fill="#1e90ff"/>
<rect x="889" y="472" width="7.5" height="189" fill="#a9a9a9"/>
<rect x="529" y="700" width="367" height="8" fill="#1e90ff"/>
<rect x="889" y="661" width="7.5" height="40" fill="#a9a9a9"/>
<rect x="672.5" y="708" width="7.5" height="38" fill="#a9a9a9"/>
<rect x="672.5" y="745" width="76.5" height="8" fill="#1e90ff"/>
<rect x="950.5" y="506.5" width="191.0" height="8" fill="#1e90ff"/>
<rect x="597" y="710" width="7.5" height="19.5" fill="#a9a9a9"/>
<path d="M571 697.5 L623 690 V717.5 L571 710 Z" fill="#ff0000" stroke="#b55" stroke-width="0.8"/>
<rect x="747" y="703" width="48.5" height="5" fill="#0a8a1a"/><rect x="747" y="703" width="48.5" height="1.5" fill="#2e7a6a"/>
<path d="M622 404.5 L636.5 413.75 L622 423 Z M651 404.5 L636.5 413.75 L651 423 Z" fill="#ebe9e4" stroke="#222" stroke-width="0.7" stroke-linejoin="miter"/>
<path d="M637.5 544.5 V558.0" stroke="#000" stroke-width="1.2"/><path d="M629 544.5 A8.5 8.5 0 0 1 646 544.5 Z" fill="#fff" stroke="#000" stroke-width="0.8"/><path d="M624.5 549.5 L637.25 558.0 L624.5 566.5 Z M650 549.5 L637.25 558.0 L650 566.5 Z" fill="#ebe9e4" stroke="#222" stroke-width="0.7" stroke-linejoin="miter"/>
<path d="M694 695.5 L708.5 704.75 L694 714 Z M723 695.5 L708.5 704.75 L723 714 Z" fill="#ebe9e4" stroke="#222" stroke-width="0.7" stroke-linejoin="miter"/>
<path d="M694 740.5 L708.5 749.75 L694 759 Z M723 740.5 L708.5 749.75 L723 759 Z" fill="#ebe9e4" stroke="#222" stroke-width="0.7" stroke-linejoin="miter"/>
<path d="M842.75 644 V657.5" stroke="none"/><path d="M834.5 644 A8.25 8 0 0 1 851 644 Z" fill="#fff" stroke="#000" stroke-width="0.8"/><path d="M830 649 L843.0 657.5 L830 666 Z M856 649 L843.0 657.5 L856 666 Z" fill="#ebe9e4" stroke="#222" stroke-width="0.7" stroke-linejoin="miter"/>
<path d="M844.5 691 V704.0" stroke="#000" stroke-width="1.2"/><path d="M836 691 A8.5 8.5 0 0 1 853 691 Z" fill="#fff" stroke="#000" stroke-width="0.8"/><path d="M831 695.5 L844.5 704.0 L831 712.5 Z M858 695.5 L844.5 704.0 L858 712.5 Z" fill="#ebe9e4" stroke="#222" stroke-width="0.7" stroke-linejoin="miter"/>
<path d="M996.25 496.5 V510.0" stroke="#000" stroke-width="1.2"/><path d="M988 496.5 A8.25 8.0 0 0 1 1004.5 496.5 Z" fill="#fff" stroke="#000" stroke-width="0.8"/><path d="M983.5 501.5 L996.5 510.0 L983.5 518.5 Z M1009.5 501.5 L996.5 510.0 L1009.5 518.5 Z" fill="#ebe9e4" stroke="#222" stroke-width="0.7" stroke-linejoin="miter"/>
<path d="M1097.25 643.5 V657.0" stroke="#000" stroke-width="1.2"/><path d="M1089 643.5 A8.25 8.5 0 0 1 1105.5 643.5 Z" fill="#fff" stroke="#000" stroke-width="0.8"/><path d="M1084.5 648.5 L1097.25 657.0 L1084.5 665.5 Z M1110 648.5 L1097.25 657.0 L1110 665.5 Z" fill="#ebe9e4" stroke="#222" stroke-width="0.7" stroke-linejoin="miter"/>
<g><path d="M790.75 464 V477.5" stroke="#000" stroke-width="1.2"/><path d="M782.5 464 A8.25 8.5 0 0 1 799 464 Z" fill="#fff" stroke="#000" stroke-width="0.8"/><path d="M777.5 469.5 L791.0 477.5 L777.5 485.5 Z M804.5 469.5 L791.0 477.5 L804.5 485.5 Z" fill="#ebe9e4" stroke="#222" stroke-width="0.7" stroke-linejoin="miter"/><rect x="774.5" y="454" width="32.5" height="33" fill="url(#hatch)"/></g>
<rect x="523.5" y="542.5" width="32" height="32" fill="#00009f"/><circle cx="539.5" cy="558.5" r="13.2" fill="#8a8a8a" stroke="#000" stroke-width="1.2"/><circle cx="539.5" cy="558.5" r="10" fill="#f2f2f2" stroke="#000" stroke-width="1.2"/><path d="M534.0 550.2 L549.5 558.5 L534.0 566.8 Z" fill="#e9e5de" stroke="#000" stroke-width="1.2" stroke-linejoin="round"/>
<rect x="1055" y="494.5" width="32" height="32" fill="#00009f"/><circle cx="1071" cy="510.5" r="13.2" fill="#8a8a8a" stroke="#000" stroke-width="1.2"/><circle cx="1071" cy="510.5" r="10" fill="#f2f2f2" stroke="#000" stroke-width="1.2"/><path d="M1065.5 502.2 L1081 510.5 L1065.5 518.8 Z" fill="#e9e5de" stroke="#000" stroke-width="1.2" stroke-linejoin="round"/>
<text x="622" y="398" font-family="DejaVu Sans Condensed, DejaVu Sans, Liberation Sans, sans-serif" font-size="9.7" font-weight="bold" fill="#ff8c00" textLength="32.0" lengthAdjust="spacingAndGlyphs" stroke="#ff8c00" stroke-width="0.45">BAV10</text>
<text x="775" y="450" font-family="DejaVu Sans Condensed, DejaVu Sans, Liberation Sans, sans-serif" font-size="9.7" font-weight="bold" fill="#ff8c00" textLength="37.5" lengthAdjust="spacingAndGlyphs" stroke="#ff8c00" stroke-width="0.45">BAV117</text>
<text x="621" y="531" font-family="DejaVu Sans Condensed, DejaVu Sans, Liberation Sans, sans-serif" font-size="9.7" font-weight="bold" fill="#ff8c00" textLength="37.0" lengthAdjust="spacingAndGlyphs" stroke="#ff8c00" stroke-width="0.45">BAV115</text>
<text x="542.5" y="527" text-anchor="middle" font-family="DejaVu Sans Condensed, DejaVu Sans, Liberation Sans, sans-serif" font-size="9.7" font-weight="bold" fill="#ff8c00" textLength="67.5" lengthAdjust="spacingAndGlyphs" stroke="#ff8c00" stroke-width="0.45">No.1 BALLAST</text>
<text x="542.5" y="538" text-anchor="middle" font-family="DejaVu Sans Condensed, DejaVu Sans, Liberation Sans, sans-serif" font-size="9.7" font-weight="bold" fill="#ff8c00" textLength="28.0" lengthAdjust="spacingAndGlyphs" stroke="#ff8c00" stroke-width="0.45">PUMP</text>
<text x="746" y="501.5" font-family="DejaVu Sans Condensed, DejaVu Sans, Liberation Sans, sans-serif" font-size="9.7" font-weight="bold" fill="#ff8c00" textLength="59.0" lengthAdjust="spacingAndGlyphs" stroke="#ff8c00" stroke-width="0.45">No.1 FILTER</text>
<text x="979.5" y="482.5" font-family="DejaVu Sans Condensed, DejaVu Sans, Liberation Sans, sans-serif" font-size="9.7" font-weight="bold" fill="#ff8c00" textLength="38.0" lengthAdjust="spacingAndGlyphs" stroke="#ff8c00" stroke-width="0.45">BAV125</text>
<text x="1073" y="474" text-anchor="middle" font-family="DejaVu Sans Condensed, DejaVu Sans, Liberation Sans, sans-serif" font-size="9.7" font-weight="bold" fill="#ff8c00" textLength="58.0" lengthAdjust="spacingAndGlyphs" stroke="#ff8c00" stroke-width="0.45">No.1 DRAIN</text>
<text x="1073" y="485.5" text-anchor="middle" font-family="DejaVu Sans Condensed, DejaVu Sans, Liberation Sans, sans-serif" font-size="9.7" font-weight="bold" fill="#ff8c00" textLength="28.0" lengthAdjust="spacingAndGlyphs" stroke="#ff8c00" stroke-width="0.45">PUMP</text>
<text x="826" y="631" font-family="DejaVu Sans Condensed, DejaVu Sans, Liberation Sans, sans-serif" font-size="9.7" font-weight="bold" fill="#ff8c00" textLength="38.0" lengthAdjust="spacingAndGlyphs" stroke="#ff8c00" stroke-width="0.45">BAV116</text>
<text x="827.5" y="677.5" font-family="DejaVu Sans Condensed, DejaVu Sans, Liberation Sans, sans-serif" font-size="9.7" font-weight="bold" fill="#ff8c00" textLength="38.0" lengthAdjust="spacingAndGlyphs" stroke="#ff8c00" stroke-width="0.45">BAV123</text>
<text x="692" y="690" font-family="DejaVu Sans Condensed, DejaVu Sans, Liberation Sans, sans-serif" font-size="9.7" font-weight="bold" fill="#ff8c00" textLength="37.0" lengthAdjust="spacingAndGlyphs" stroke="#ff8c00" stroke-width="0.45">BAV103</text>
<text x="692" y="734" font-family="DejaVu Sans Condensed, DejaVu Sans, Liberation Sans, sans-serif" font-size="9.7" font-weight="bold" fill="#ff8c00" textLength="37.0" lengthAdjust="spacingAndGlyphs" stroke="#ff8c00" stroke-width="0.45">BAV102</text>
<text x="745" y="682" font-family="DejaVu Sans Condensed, DejaVu Sans, Liberation Sans, sans-serif" font-size="9.7" font-weight="bold" fill="#ff8c00" textLength="39.0" lengthAdjust="spacingAndGlyphs" stroke="#ff8c00" stroke-width="0.45">Strainer</text>
<text x="598.8" y="742" text-anchor="middle" font-family="DejaVu Sans Condensed, DejaVu Sans, Liberation Sans, sans-serif" font-size="9.7" font-weight="bold" fill="#ff8c00" textLength="44.5" lengthAdjust="spacingAndGlyphs" stroke="#ff8c00" stroke-width="0.45">Stripping</text>
<text x="598.8" y="753" text-anchor="middle" font-family="DejaVu Sans Condensed, DejaVu Sans, Liberation Sans, sans-serif" font-size="9.7" font-weight="bold" fill="#ff8c00" textLength="37.0" lengthAdjust="spacingAndGlyphs" stroke="#ff8c00" stroke-width="0.45">Eductor</text>
<text x="912" y="605.5" font-family="DejaVu Sans Condensed, DejaVu Sans, Liberation Sans, sans-serif" font-size="9.7" font-weight="bold" fill="#ff8c00" textLength="39.0" lengthAdjust="spacingAndGlyphs" stroke="#ff8c00" stroke-width="0.45">No.1 FM</text>
<text x="917.5" y="674.6" font-family="DejaVu Sans Condensed, DejaVu Sans, Liberation Sans, sans-serif" font-size="9.7" font-weight="bold" fill="#ff8c00" textLength="30.8" lengthAdjust="spacingAndGlyphs" stroke="#ff8c00" stroke-width="0.45">TOTAL</text>
<text x="1018" y="623" text-anchor="middle" font-family="DejaVu Sans Condensed, DejaVu Sans, Liberation Sans, sans-serif" font-size="9.7" font-weight="bold" fill="#ff8c00" textLength="39.0" lengthAdjust="spacingAndGlyphs" stroke="#ff8c00" stroke-width="0.45">No.1 UV</text>
<text x="1018" y="633.8" text-anchor="middle" font-family="DejaVu Sans Condensed, DejaVu Sans, Liberation Sans, sans-serif" font-size="9.7" font-weight="bold" fill="#ff8c00" textLength="46.0" lengthAdjust="spacingAndGlyphs" stroke="#ff8c00" stroke-width="0.45">REACTOR</text>
<text x="1078" y="677" font-family="DejaVu Sans Condensed, DejaVu Sans, Liberation Sans, sans-serif" font-size="9.7" font-weight="bold" fill="#ff8c00" textLength="38.0" lengthAdjust="spacingAndGlyphs" stroke="#ff8c00" stroke-width="0.45">BAV118</text>
<text x="1060.5" y="600.5" font-family="DejaVu Sans Condensed, DejaVu Sans, Liberation Sans, sans-serif" font-size="12" font-weight="bold" fill="#ff8c00" textLength="14.0" lengthAdjust="spacingAndGlyphs" stroke="#ff8c00" stroke-width="0.45">PV</text>
<text x="1061.5" y="626" font-family="DejaVu Sans Condensed, DejaVu Sans, Liberation Sans, sans-serif" font-size="12" font-weight="bold" fill="#ff8c00" textLength="13.5" lengthAdjust="spacingAndGlyphs" stroke="#ff8c00" stroke-width="0.45">SP</text>
<text x="1112.5" y="600.5" font-family="DejaVu Sans Condensed, DejaVu Sans, Liberation Sans, sans-serif" font-size="11" font-weight="bold" fill="#ff8c00" textLength="11.5" lengthAdjust="spacingAndGlyphs" stroke="#ff8c00" stroke-width="0.45">%</text>
<text x="1112.5" y="626" font-family="DejaVu Sans Condensed, DejaVu Sans, Liberation Sans, sans-serif" font-size="11" font-weight="bold" fill="#ff8c00" textLength="11.5" lengthAdjust="spacingAndGlyphs" stroke="#ff8c00" stroke-width="0.45">%</text>
<text x="886" y="412" text-anchor="middle" font-family="DejaVu Sans Condensed, DejaVu Sans, Liberation Sans, sans-serif" font-size="9.7" font-weight="bold" fill="#fff" textLength="76.5" lengthAdjust="spacingAndGlyphs" stroke="#fff" stroke-width="0.45">BALLAST TANK/</text>
<text x="886" y="422.5" text-anchor="middle" font-family="DejaVu Sans Condensed, DejaVu Sans, Liberation Sans, sans-serif" font-size="9.7" font-weight="bold" fill="#fff" textLength="62.0" lengthAdjust="spacingAndGlyphs" stroke="#fff" stroke-width="0.45">OVERBOARD</text>
<text x="1194" y="655.7" text-anchor="middle" font-family="DejaVu Sans Condensed, DejaVu Sans, Liberation Sans, sans-serif" font-size="9.7" font-weight="bold" fill="#fff" textLength="76.5" lengthAdjust="spacingAndGlyphs" stroke="#fff" stroke-width="0.45">BALLAST TANK/</text>
<text x="1194" y="667" text-anchor="middle" font-family="DejaVu Sans Condensed, DejaVu Sans, Liberation Sans, sans-serif" font-size="9.7" font-weight="bold" fill="#fff" textLength="62.0" lengthAdjust="spacingAndGlyphs" stroke="#fff" stroke-width="0.45">OVERBOARD</text>
<text x="1152.8" y="516" font-family="DejaVu Sans Condensed, DejaVu Sans, Liberation Sans, sans-serif" font-size="9.7" font-weight="bold" fill="#fff" textLength="61.2" lengthAdjust="spacingAndGlyphs" stroke="#fff" stroke-width="0.45">OVERBOARD</text>
<text x="754" y="751.8" font-family="DejaVu Sans Condensed, DejaVu Sans, Liberation Sans, sans-serif" font-size="9.7" font-weight="bold" fill="#fff" textLength="61.8" lengthAdjust="spacingAndGlyphs" stroke="#fff" stroke-width="0.45">OVERBOARD</text>
<text x="449" y="706.8" font-family="DejaVu Sans Condensed, DejaVu Sans, Liberation Sans, sans-serif" font-size="9.7" font-weight="bold" fill="#fff" textLength="72.0" lengthAdjust="spacingAndGlyphs" stroke="#fff" stroke-width="0.45">BALLAST TANK</text>
<text x="925" y="514.6" font-family="DejaVu Sans Condensed, DejaVu Sans, Liberation Sans, sans-serif" font-size="14.6" font-weight="bold" fill="#fff" textLength="11.0" lengthAdjust="spacingAndGlyphs" stroke="#fff" stroke-width="0.45">A</text>
<text x="686" y="607.5" font-family="DejaVu Sans Condensed, DejaVu Sans, Liberation Sans, sans-serif" font-size="14.6" font-weight="bold" fill="#fff" textLength="11.0" lengthAdjust="spacingAndGlyphs" stroke="#fff" stroke-width="0.45">A</text>
<rect x="915.5" y="612.0" width="30.5" height="14.5" fill="#000" stroke="#9a9a9a" stroke-width="1"/><svg x="916" y="612.5" width="29.5" height="13.5" viewBox="916 612.5 29.5 13.5" overflow="hidden"><text x="917" y="623.5" text-anchor="start" font-family="DejaVu Sans Condensed, DejaVu Sans, Liberation Sans, sans-serif" font-size="12" font-weight="bold" fill="#ffff00" stroke="#ffff00" stroke-width="0.3" textLength="28" lengthAdjust="spacingAndGlyphs">####</text></svg>
<text x="949.5" y="623" font-family="DejaVu Sans, sans-serif" font-size="11.5" font-weight="bold" fill="#ff8c00" textLength="29.5" lengthAdjust="spacingAndGlyphs" stroke="#ff8c00" stroke-width="0.45">m³/h</text>
<rect x="909.0" y="682.0" width="44.299999999999955" height="14.0" fill="#000" stroke="#9a9a9a" stroke-width="1"/><svg x="909.5" y="682.5" width="43.299999999999955" height="13.0" viewBox="909.5 682.5 43.299999999999955 13.0" overflow="hidden"><text x="910.5" y="693.3" text-anchor="start" font-family="DejaVu Sans Condensed, DejaVu Sans, Liberation Sans, sans-serif" font-size="12" font-weight="bold" fill="#ffff00" stroke="#ffff00" stroke-width="0.3" textLength="42" lengthAdjust="spacingAndGlyphs">######</text></svg>
<text x="956" y="692.8" font-family="DejaVu Sans, sans-serif" font-size="11.5" font-weight="bold" fill="#ff8c00" textLength="16.0" lengthAdjust="spacingAndGlyphs" stroke="#ff8c00" stroke-width="0.45">m³</text>
<rect x="1080.5" y="591.0" width="30.5" height="15.0" fill="#000" stroke="#9a9a9a" stroke-width="1"/><svg x="1081" y="591.5" width="29.5" height="14.0" viewBox="1081 591.5 29.5 14.0" overflow="hidden"><text x="1082" y="602.8" text-anchor="start" font-family="DejaVu Sans Condensed, DejaVu Sans, Liberation Sans, sans-serif" font-size="12" font-weight="bold" fill="#ffff00" stroke="#ffff00" stroke-width="0.3" textLength="28" lengthAdjust="spacingAndGlyphs">####</text></svg>
<rect x="1080.5" y="615.0" width="30.5" height="15.0" fill="#000" stroke="#9a9a9a" stroke-width="1"/><svg x="1081" y="615.5" width="29.5" height="14.0" viewBox="1081 615.5 29.5 14.0" overflow="hidden"><text x="1082" y="626.8" text-anchor="start" font-family="DejaVu Sans Condensed, DejaVu Sans, Liberation Sans, sans-serif" font-size="12" font-weight="bold" fill="#00ff00" stroke="#00ff00" stroke-width="0.3" textLength="28" lengthAdjust="spacingAndGlyphs">####</text></svg>
<g>
<path d="M980 650 C988 647.5 997 647.3 1004 648.5 V668 C997 669.2 988 669 980 666.8 Z" fill="url(#silver)"/>
<rect x="990" y="648" width="4" height="20.8" fill="#8f8f8f" opacity="0.55"/>
<path d="M1055 650 C1049 647.5 1043 647.3 1037 648.5 V668 C1043 669.2 1049 669 1055 666.8 Z" fill="url(#silver)"/>
<rect x="1043" y="648" width="4" height="20.8" fill="#8f8f8f" opacity="0.55"/>
<rect x="978" y="644.3" width="2.3" height="26.5" rx="1" fill="url(#silver)" stroke="#777" stroke-width="0.3"/>
<rect x="1054.5" y="644.3" width="2.3" height="26.5" rx="1" fill="url(#silver)" stroke="#777" stroke-width="0.3"/>
<rect x="991.5" y="637.5" width="17" height="5" rx="2" fill="#8e8e8e"/><rect x="993" y="638.5" width="14" height="1.5" fill="#b5b5b5"/><rect x="997.5" y="642" width="7" height="7" fill="#9a9a9a"/>
<circle cx="1020.7" cy="658" r="18.3" fill="#8f8f8f"/><circle cx="1020.7" cy="658" r="17.3" fill="#a8a8a8"/>
<circle cx="1020.7" cy="658.3" r="6.1" fill="#1e90ff"/>
</g>
<rect x="1010.0" y="637.0" width="23.0" height="10.0" fill="#000" stroke="#9a9a9a" stroke-width="1"/><svg x="1010.5" y="637.5" width="22.0" height="9.0" viewBox="1010.5 637.5 22.0 9.0" overflow="hidden"><text x="1005" y="645.8" text-anchor="start" font-family="DejaVu Sans Condensed, DejaVu Sans, Liberation Sans, sans-serif" font-size="10" font-weight="bold" fill="#ffff00" stroke="#ffff00" stroke-width="0.3">###.#</text></svg>
<text x="1037" y="644.9" font-family="DejaVu Sans Condensed, DejaVu Sans, Liberation Sans, sans-serif" font-size="7.6" font-weight="bold" fill="#ff8c00" textLength="13.0" lengthAdjust="spacingAndGlyphs" stroke="#ff8c00" stroke-width="0.45">Bar</text>
<g>
<rect x="924" y="632" width="17" height="11" rx="2.8" fill="#0a0a0a"/>
<rect x="929.3" y="642.5" width="6.7" height="8" fill="url(#hpipe)"/><rect x="930" y="642.5" width="5" height="8" fill="#ececec" opacity="0.85"/>
<rect x="918.3" y="649.7" width="3.6" height="14.3" rx="1.2" fill="url(#silver)"/>
<rect x="943" y="649.7" width="3.6" height="14.3" rx="1.2" fill="url(#silver)"/>
<rect x="921" y="651" width="23" height="11.5" fill="#b9b9b9"/>
<rect x="922.5" y="650" width="19.5" height="13.8" rx="1.5" fill="url(#silver)"/>
</g>
<g>
<!-- thin gauge pipe + blue ball -->
<path d="M684.5 537 V503.8 H746.5 V520" fill="none" stroke="#a9a9a9" stroke-width="1.6"/>
<circle cx="714.5" cy="503.6" r="9.6" fill="#1e90ff"/>
<!-- inlet -->
<rect x="669.8" y="536" width="2.7" height="43" rx="1" fill="url(#tank2)"/>
<rect x="672" y="542" width="29" height="30.2" fill="url(#tank2)"/>
<path d="M700.3 542 L708 538.5 V575.7 L700.3 572.2 Z" fill="url(#tank2)"/>
<rect x="677.5" y="536.3" width="11" height="2" rx="1" fill="#8a8a8a"/><rect x="681.5" y="537" width="4" height="5.5" fill="#777"/>
<circle cx="685.5" cy="558.5" r="5" fill="none" stroke="#505050" stroke-width="0.7"/><circle cx="685.5" cy="558.5" r="2.5" fill="none" stroke="#505050" stroke-width="0.7"/>
<rect x="686.2" y="572" width="7.5" height="15.5" fill="url(#hpipe)"/><rect x="680" y="587" width="20" height="2.5" rx="1.2" fill="#7a7a7a"/>
<!-- legs -->
<path d="M717.5 572 Q717.5 571 719 571 H741.5 Q743 571 743 572.5 V590 H738.5 V612 H724 V590 H717.5 Z" fill="#454545"/>
<rect x="725.5" y="587" width="12" height="25" fill="#595959"/>
<path d="M810 572 Q810 571 811.5 571 H833.5 Q835 571 835 572.5 V590 H830.5 V612 H816 V590 H810 Z" fill="#454545"/>
<rect x="817.5" y="587" width="12" height="25" fill="#595959"/>
<!-- tank body -->
<rect x="707" y="524.5" width="138.7" height="65.8" rx="2" fill="url(#tank)"/>
<rect x="707" y="524.5" width="9.5" height="65.5" rx="1.5" fill="url(#tank2)"/><path d="M716.5 525 V590" stroke="#2a2a2a" stroke-width="0.9"/>
<rect x="836.7" y="524.5" width="9" height="65.8" rx="1.5" fill="url(#tank2)"/><path d="M836.7 525 V590" stroke="#2a2a2a" stroke-width="0.9"/>
<g fill="#3c3c3c"><circle cx="706.5" cy="529" r="1"/><circle cx="706.5" cy="537" r="1"/><circle cx="706.5" cy="565" r="1"/><circle cx="706.5" cy="577" r="1"/><circle cx="706.5" cy="586" r="1"/><circle cx="846.4" cy="529" r="1.1"/><circle cx="846.4" cy="537" r="1.1"/><circle cx="846.4" cy="571" r="1.1"/><circle cx="846.4" cy="578" r="1.1"/><circle cx="846.4" cy="586" r="1.1"/></g>
<!-- legs front overlay -->
<path d="M717.5 590 V572 Q717.5 571 719 571 H741.5 Q743 571 743 572.5 V590 Z" fill="#454545"/>
<path d="M810 590 V572 Q810 571 811.5 571 H833.5 Q835 571 835 572.5 V590 Z" fill="#454545"/>
<path d="M724 573 V590 M830.5 573 V590" stroke="#2e2e2e" stroke-width="0.8"/>
<!-- lugs + top fittings -->
<path d="M724.5 524.5 L730.5 516.5 L736.5 524.5 Z" fill="#8a8a8a"/><circle cx="730.5" cy="519.5" r="0.9" fill="#eee"/>
<path d="M816.5 524.5 L822.5 516.5 L828.5 524.5 Z" fill="#8a8a8a"/><circle cx="822.5" cy="519.5" r="0.9" fill="#eee"/>
<path d="M689 541 L693.5 535.5 L698 541 Z" fill="#8a8a8a"/><circle cx="693.5" cy="538" r="0.8" fill="#eee"/>
<rect x="740" y="517.3" width="13" height="2.2" rx="1" fill="#8a8a8a"/><rect x="744.5" y="519" width="4" height="6" fill="#7a7a7a"/>
<rect x="764.5" y="508" width="5.5" height="5.5" fill="#8b6a1f"/><rect x="765" y="508" width="4.5" height="1.3" fill="#5a4514"/>
<ellipse cx="767.5" cy="516.5" rx="6" ry="3" fill="#6e6e6e"/><rect x="766" y="518" width="3" height="7" fill="#7a7a7a"/>
<!-- bottom outlet -->
<path d="M762 590 Q764 587.5 777 587 Q790 587.5 792 590 L789.5 598 H765 Z" fill="#6a6a6a"/>
<rect x="755.5" y="597.5" width="43" height="3.3" rx="1.6" fill="#808080"/>
<!-- motor -->
<rect x="846" y="547" width="12" height="20" fill="#7c7c7c"/><rect x="847.8" y="549" width="9.5" height="6.5" fill="#e4e6ea"/><rect x="851" y="555.3" width="6.5" height="1.5" fill="#1c9a1c"/>
<g fill="#6e6e6e"><circle cx="849" cy="543" r="1.3"/><circle cx="853" cy="543.5" r="1.3"/></g>
<rect x="856" y="507.3" width="20" height="28" rx="1.5" fill="url(#green2)"/>
<rect x="856" y="507.3" width="20" height="2.8" rx="1.3" fill="#1a9a1a"/>
<g stroke="#042c04" stroke-width="1"><path d="M858.5 511.5V533.5M861 511.5V533.5M863.5 511.5V533.5M866 511.5V533.5M868.5 511.5V533.5M871 511.5V533.5M873.5 511.5V533.5"/></g>
<rect x="875.5" y="515.3" width="5.5" height="5.7" fill="#1fae1f"/>
<rect x="855" y="535" width="22" height="2.3" rx="1" fill="#0a520a"/>
<path d="M860.5 537.3 H872 V547 H860.5 Z" fill="url(#green)"/>
<rect x="858.5" y="546.5" width="15.5" height="21.5" rx="1.5" fill="url(#green)"/>
</g>
<rect x="673.0" y="544.0" width="21.5" height="10.5" fill="#000" stroke="#9a9a9a" stroke-width="1"/><svg x="673.5" y="544.5" width="20.5" height="9.5" viewBox="673.5 544.5 20.5 9.5" overflow="hidden"><text x="668" y="553" text-anchor="start" font-family="DejaVu Sans Condensed, DejaVu Sans, Liberation Sans, sans-serif" font-size="10" font-weight="bold" fill="#ffff00" stroke="#ffff00" stroke-width="0.3">###.#</text></svg>
<text x="699" y="552.6" font-family="DejaVu Sans Condensed, DejaVu Sans, Liberation Sans, sans-serif" font-size="7.6" font-weight="bold" fill="#ff8c00" textLength="13.5" lengthAdjust="spacingAndGlyphs" stroke="#ff8c00" stroke-width="0.45">Bar</text>
<rect x="745.5" y="539.5" width="63.5" height="27.5" fill="#1e90ff"/>
<text x="777.3" y="558.8" text-anchor="middle" font-family="DejaVu Sans Condensed, DejaVu Sans, Liberation Sans, sans-serif" font-size="15" font-weight="normal" fill="#000" textLength="38.0" lengthAdjust="spacingAndGlyphs">Flush</text>
<rect x="463" y="837" width="43.2" height="43" rx="3.8" fill="url(#btnframe)"/><rect x="465.6" y="839.6" width="38" height="37.5" rx="4" fill="#14191b" filter="url(#blur1)"/><rect x="467.1" y="840.7" width="35" height="34.8" rx="3.3" fill="#800000" stroke="#f0f0f0" stroke-width="0.7"/><text x="461.7" y="865.2" font-family="DejaVu Sans Condensed, DejaVu Sans, Liberation Sans, sans-serif" font-size="16.2" font-weight="bold" fill="#00ff00" textLength="46.0" lengthAdjust="spacingAndGlyphs" stroke="#00ff00" stroke-width="0.45">Home</text>
<rect x="663" y="837" width="43.2" height="43" rx="3.8" fill="url(#btnframe)"/><rect x="665.6" y="839.6" width="38" height="37.5" rx="4" fill="#14191b" filter="url(#blur1)"/><rect x="667.1" y="840.7" width="35" height="34.8" rx="3.3" fill="#800000" stroke="#f0f0f0" stroke-width="0.7"/><text x="635.8" y="865.2" font-family="DejaVu Sans Condensed, DejaVu Sans, Liberation Sans, sans-serif" font-size="16.2" font-weight="bold" fill="#add8e6" textLength="97.2" lengthAdjust="spacingAndGlyphs" stroke="#add8e6" stroke-width="0.45">UV Manager</text>
<rect x="825.5" y="836.5" width="120" height="44" fill="none" stroke="#fff" stroke-width="1" stroke-dasharray="1.5 2.5"/><path d="M826 837 L945.5 880 M945.5 837 L826 880" stroke="#ff4500" stroke-width="2"/>
<text x="885.5" y="865.2" text-anchor="middle" font-family="DejaVu Sans Condensed, DejaVu Sans, Liberation Sans, sans-serif" font-size="16.2" font-weight="bold" fill="#add8e6" textLength="47.0" lengthAdjust="spacingAndGlyphs" stroke="#add8e6" stroke-width="0.45">Alarm</text>
<rect x="1063" y="837" width="43.2" height="43" rx="3.8" fill="url(#btnframe)"/><rect x="1065.6" y="839.6" width="38" height="37.5" rx="4" fill="#14191b" filter="url(#blur1)"/><rect x="1067.1" y="840.7" width="35" height="34.8" rx="3.3" fill="#800000" stroke="#f0f0f0" stroke-width="0.7"/><text x="1069.5" y="865.2" font-family="DejaVu Sans Condensed, DejaVu Sans, Liberation Sans, sans-serif" font-size="16.2" font-weight="bold" fill="#b4dde8" textLength="30.5" lengthAdjust="spacingAndGlyphs" stroke="#b4dde8" stroke-width="0.45">Log</text>
<rect x="1263" y="837" width="43.2" height="43" rx="3.8" fill="url(#btnframe)"/><rect x="1265.6" y="839.6" width="38" height="37.5" rx="4" fill="#14191b" filter="url(#blur1)"/><rect x="1267.1" y="840.7" width="35" height="34.8" rx="3.3" fill="#800000" stroke="#f0f0f0" stroke-width="0.7"/><text x="1262.5" y="865.2" font-family="DejaVu Sans Condensed, DejaVu Sans, Liberation Sans, sans-serif" font-size="16.2" font-weight="bold" fill="#add8e6" textLength="45.5" lengthAdjust="spacingAndGlyphs" stroke="#add8e6" stroke-width="0.45">Maint</text>
</svg>
<div id="props"><div class="phead"><span>Properties</span><svg class="abs" style="right:2px;top:3px" width="50" height="16" viewBox="0 0 50 16"><path d="M4 5 H11 L7.5 9.5 Z" fill="#fff"/><path d="M22.5 2.5 H26.5 V8 H22.5 Z M21 8.3 H28 M24.5 8.5 V13" fill="none" stroke="#fff" stroke-width="1.2"/><path d="M37.5 3 L46.5 12.5 M46.5 3 L37.5 12.5" stroke="#fff" stroke-width="1.5"/></svg></div>
<div class="pb">
<div class="prow" style="top:3px"><span style="left:7px;top:5.5px;-webkit-text-stroke:0.2px #fff;font-size:14.2px">home(PageWidget)</span><svg class="abs" style="left:421px;top:11px" width="11" height="8" viewBox="0 0 11 8"><path d="M1.5 1.5 L5.5 5.5 L9.5 1.5" fill="none" stroke="#fff" stroke-width="2"/></svg></div>
<div class="prow" style="top:37px"><span>General</span><svg class="abs" style="left:426px;top:11px" width="11" height="8" viewBox="0 0 11 8"><path d="M1.5 1.5 L5.5 5.5 L9.5 1.5" fill="none" stroke="#fff" stroke-width="2"/></svg></div>
<div class="prow" style="top:71px"><span>Image</span><svg class="abs" style="left:426px;top:11px" width="11" height="8" viewBox="0 0 11 8"><path d="M1.5 1.5 L5.5 5.5 L9.5 1.5" fill="none" stroke="#fff" stroke-width="2"/></svg></div>
<div class="prow" style="top:105px"><span>Security</span><svg class="abs" style="left:426px;top:11px" width="11" height="8" viewBox="0 0 11 8"><path d="M1.5 1.5 L5.5 5.5 L9.5 1.5" fill="none" stroke="#fff" stroke-width="2"/></svg></div>
</div>
<div id="pstrip">
<div class="ptab" style="top:1px;background:#00b8b2"><svg class="abs" style="left:4px;top:4px" width="20" height="20" viewBox="0 0 20 20" fill="none" stroke="#fff" stroke-width="1"><path d="M7.5 2.5 L13 5.5 V12.5 L7.5 15.5 L2 12.5 V5.5 Z M2 5.5 L7.5 8.5 L13 5.5 M7.5 8.5 V15.5"/><rect x="15.5" y="4" width="3" height="2" fill="#fff" stroke="none"/><rect x="15.5" y="8" width="3" height="2" fill="#fff" stroke="none"/><rect x="15.5" y="12" width="3" height="2" fill="#fff" stroke="none"/></svg></div>
<div class="ptab" style="top:31px"><svg class="abs" style="left:4px;top:4px" width="20" height="20" viewBox="0 0 20 20" fill="none" stroke="#fff" stroke-width="1"><path d="M7 3.5H18.5M7 8.5H18.5M7 13.5H18.5M7 18H18.5"/><rect x="2" y="2" width="3" height="3" fill="#fff" stroke="none"/><path d="M2.5 7.5h2M2.5 10h2M2.5 12.5h2M2.5 15h2M2.5 17.5h2" stroke-width="0.8"/></svg></div>
<div class="ptab" style="top:61px"><svg class="abs" style="left:3px;top:3px" width="22" height="22" viewBox="0 0 22 22" fill="none" stroke="#fff" stroke-width="1"><path d="M11 3 L19 7.5 L11 12 L3 7.5 Z" fill="#fff"/><path d="M3 11 L11 15.5 L19 11 M3 14.5 L11 19 L19 14.5"/></svg></div>
<div class="ptab" style="top:91px"><svg class="abs" style="left:3px;top:3px" width="22" height="22" viewBox="0 0 22 22" fill="none" stroke="#fff" stroke-width="1"><path d="M5 16.5 H2.5 V3 H16 V5.5"/><rect x="5.5" y="6" width="14" height="14"/><path d="M9 6 V10.5 L11.5 9 L14 10.5 V6 Z" fill="#fff"/></svg></div>
</div></div>
<div id="logs"><span class="abs" style="left:7px;top:7px;font-size:14px">Logs</span><div class="abs" style="left:7px;top:28px;width:30px;height:6px;background:#3f3f46"></div></div>
<div id="status"><span class="abs" style="left:283px;top:4px;font-size:11px;letter-spacing:-0.5px;-webkit-text-stroke:0.2px #fff">(963,525)</span><span class="abs" style="left:690px;top:3px;font-size:13.5px;letter-spacing:-0.2px;-webkit-text-stroke:0.2px #fff">80%</span>
<div class="abs" style="left:746px;top:10px;width:228px;height:3px;background:#fff;border-radius:1.5px"></div><div class="abs" style="left:778px;top:3px;width:16px;height:16px;border-radius:8px;background:#e8e8e8;border:1.5px solid #b4b9c2"></div>
<svg class="abs" style="left:991.5px;top:4.5px" width="14" height="14" viewBox="0 0 16 16" fill="none" stroke="#fff" stroke-width="1.6"><path d="M1.5 5.5 V1.5 H5.5 M10.5 1.5 H14.5 V5.5 M14.5 10.5 V14.5 H10.5 M5.5 14.5 H1.5 V10.5"/></svg></div>
<div id="frame"></div></div></body></html>
